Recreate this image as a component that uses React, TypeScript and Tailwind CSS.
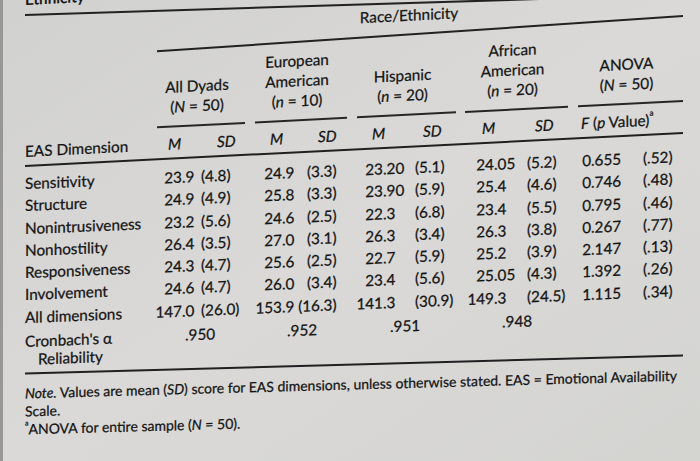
import React from 'react'

// shared column layout, used by header and body rows
const COLS =
  'grid grid-cols-[125px_48px_52px_44px_58px_58px_52px_60px_55px_60px_63px]'

type Spec = { kind: 'dec'; w: string } | { kind: 'left'; pl: string }

// how each numeric column lines up: on the decimal point or on the left edge
const specs: Spec[] = [
  { kind: 'dec', w: 'w-[32px]' },
  { kind: 'left', pl: 'pl-[3px]' },
  { kind: 'dec', w: 'w-[32px]' },
  { kind: 'dec', w: 'w-[26px]' },
  { kind: 'dec', w: 'w-[31px]' },
  { kind: 'left', pl: 'pl-[5px]' },
  { kind: 'dec', w: 'w-[32px]' },
  { kind: 'left', pl: 'pl-[5px]' },
  { kind: 'dec', w: 'w-[14px]' },
  { kind: 'left', pl: 'pl-[6px]' },
]

const rows: string[][] = [
  ['Sensitivity', '23.9', '(4.8)', '24.9', '(3.3)', '23.20', '(5.1)', '24.05', '(5.2)', '0.655', '(.52)'],
  ['Structure', '24.9', '(4.9)', '25.8', '(3.3)', '23.90', '(5.9)', '25.4', '(4.6)', '0.746', '(.48)'],
  ['Nonintrusiveness', '23.2', '(5.6)', '24.6', '(2.5)', '22.3', '(6.8)', '23.4', '(5.5)', '0.795', '(.46)'],
  ['Nonhostility', '26.4', '(3.5)', '27.0', '(3.1)', '26.3', '(3.4)', '26.3', '(3.8)', '0.267', '(.77)'],
  ['Responsiveness', '24.3', '(4.7)', '25.6', '(2.5)', '22.7', '(5.9)', '25.2', '(3.9)', '2.147', '(.13)'],
  ['Involvement', '24.6', '(4.7)', '26.0', '(3.4)', '23.4', '(5.6)', '25.05', '(4.3)', '1.392', '(.26)'],
  ['All dimensions', '147.0', '(26.0)', '153.9', '(16.3)', '141.3', '(30.9)', '149.3', '(24.5)', '1.115', '(.34)'],
]

const groups = [
  { lines: ['All Dyads', <>(<i>N</i> = 50)</>], m: 'ml-[7px] mr-[5px]' },
  { lines: ['European', 'American', <>(<i>n</i> = 10)</>], m: 'ml-[5px] mr-[5px]' },
  { lines: ['Hispanic', <>(<i>n</i> = 20)</>], m: 'ml-[5px] mr-[6px]' },
  { lines: ['African', 'American', <>(<i>n</i> = 20)</>], m: 'ml-[3px] mr-[9px]' },
  { lines: ['ANOVA', <>(<i>N</i> = 50)</>], m: 'ml-[1px] mr-[17px]' },
]

const msd = [
  { t: 'M', c: 'pl-[18px]' },
  { t: 'SD', c: 'pl-[19px]' },
  { t: 'M', c: 'pl-[20px]' },
  { t: 'SD', c: 'pl-[24px]' },
  { t: 'M', c: 'pl-[20px]' },
  { t: 'SD', c: 'pl-[13px]' },
  { t: 'M', c: 'pl-[20px]' },
  { t: 'SD', c: 'pl-[13px]' },
]

function Num({ v, spec }: { v: string; spec: Spec }) {
  if (spec.kind === 'left') {
    return <div className={`${spec.pl} whitespace-nowrap`}>{v}</div>
  }
  const i = v.indexOf('.')
  return (
    <div className="flex whitespace-nowrap">
      <span className={`${spec.w} shrink-0 text-right`}>{v.slice(0, i)}</span>
      <span>{v.slice(i)}</span>
    </div>
  )
}

export default function App() {
  return (
    <div className="w-[700px] h-[461px] overflow-hidden border-l-[3px] border-[#979795] bg-linear-to-br from-[#d1d1cf] via-[#dad9d7] to-[#d4d4d1] font-['Lato','Liberation_Sans',sans-serif] text-[15.3px] text-[#141414] [-webkit-text-stroke:0.25px_#141414]">
      {/* header block */}
      <div className="[transform:skewY(-2.86deg)] origin-top-left">
        <div className="ml-[22px] -mt-[10px] h-[20px] leading-[20px] font-semibold">Ethnicity</div>
        <div className="ml-[22px] mt-[5px] h-[2px] bg-[#222] [transform:skewY(1.09deg)] origin-left" />

        <div className={`${COLS} ml-[22px] mt-[8px]`}>
          <div className="col-start-2 col-span-10 ml-[7px] mr-[17px]">
            <div className="h-[20px] leading-[20px] text-center pr-[22px]">Race/Ethnicity</div>
            <div className="mt-[13px] h-[2px] bg-[#222] [transform:skewY(-0.97deg)] origin-left" />
          </div>
        </div>

        <div className={`${COLS} ml-[22px] mt-[5px]`}>
          <div />
          {groups.map((g, i) => (
            <div key={i} className="col-span-2 flex flex-col">
              <div className={`${g.m} h-[60px] flex flex-col justify-end text-center leading-[20px] pr-2 whitespace-nowrap`}>
                {g.lines.map((l, j) => (
                  <div key={j}>{l}</div>
                ))}
              </div>
              <div className={`${g.m} mt-[9px] h-[1.8px] bg-[#262626]`} />
            </div>
          ))}
        </div>

        <div className={`${COLS} ml-[22px] mt-[6.5px] h-[20px] leading-[20px]`}>
          <div className="whitespace-nowrap">EAS Dimension</div>
          {msd.map((m, i) => (
            <div key={i} className={`${m.c} italic`}>{m.t}</div>
          ))}
          <div className="col-span-2 pl-[4px] whitespace-nowrap">
            <i>F</i> (<i>p</i> Value)<sup className="text-[8px] align-super">a</sup>
          </div>
        </div>
        <div className="ml-[22px] mr-[17px] mt-[3.5px] h-[2px] bg-[#202020]" />
      </div>

      {/* body rows */}
      <div className="[transform:skewY(-2.35deg)] origin-top-left pt-[5px]">
        {rows.map((r) => (
          <div key={r[0]} className={`${COLS} ml-[22px] h-[22.3px] leading-[22.3px]`}>
            <div className="whitespace-nowrap">{r[0]}</div>
            {r.slice(1).map((v, i) => (
              <Num key={i} v={v} spec={specs[i]} />
            ))}
          </div>
        ))}
        <div className={`${COLS} ml-[22px] mt-[4px] leading-[18px]`}>
          <div className="whitespace-nowrap">
            <div>Cronbach's α</div>
            <div className="pl-[13px]">Reliability</div>
          </div>
          <div className="col-span-2 pl-[35px]">.950</div>
          <div className="col-span-2 pl-[37px]">.952</div>
          <div className="col-span-2 pl-[38px]">.951</div>
          <div className="col-span-2 pl-[40px]">.948</div>
        </div>
      </div>

      {/* note */}
      <div className="[transform:skewY(-1.55deg)] origin-top-left">
        <div className="ml-[22px] mr-[17px] mt-[4.5px] h-[2px] bg-[#202020]" />
        <div className="ml-[22px] mt-[10px] text-[14px] leading-[18px] whitespace-nowrap">
          <div>
            <i>Note.</i> Values are mean (<i>SD</i>) score for EAS dimensions, unless otherwise stated. EAS = Emotional Availability
          </div>
          <div>Scale.</div>
          <div>
            <sup className="text-[7px] align-super">a</sup>ANOVA for entire sample (<i>N</i> = 50).
          </div>
        </div>
      </div>
    </div>
  )
}
